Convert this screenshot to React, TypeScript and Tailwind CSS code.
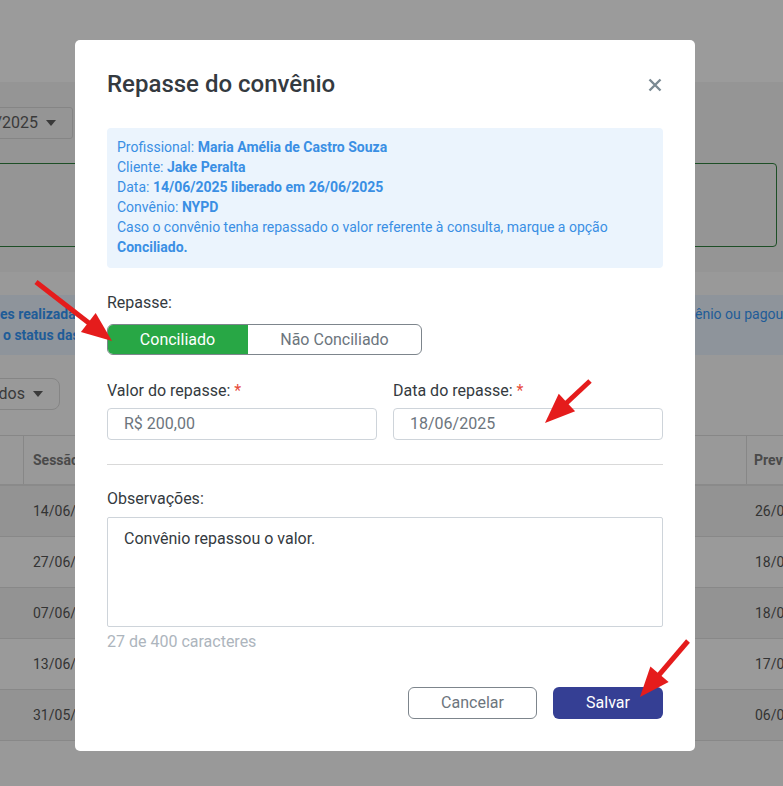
import React from "react";

type Pt = [number, number];

function Arrow({ tail, tip }: { tail: Pt; tip: Pt }) {
  const dx = tip[0] - tail[0];
  const dy = tip[1] - tail[1];
  const len = Math.hypot(dx, dy);
  const ux = dx / len;
  const uy = dy / len;
  const headLen = 30;
  const half = 12;
  const bx = tip[0] - ux * headLen;
  const by = tip[1] - uy * headLen;
  const px = -uy;
  const py = ux;
  const c1: Pt = [bx + px * half, by + py * half];
  const c2: Pt = [bx - px * half, by - py * half];
  const lineEnd: Pt = [bx + ux * 4, by + uy * 4];
  return (
    <g>
      <line
        x1={tail[0]}
        y1={tail[1]}
        x2={lineEnd[0]}
        y2={lineEnd[1]}
        stroke="#e51c1c"
        strokeWidth={5}
      />
      <polygon
        points={`${tip[0]},${tip[1]} ${c1[0]},${c1[1]} ${c2[0]},${c2[1]}`}
        fill="#e51c1c"
      />
    </g>
  );
}

const rows = [
  { d: "14/06/2025", p: "26/07/2025", bg: "bg-[#939393]" },
  { d: "27/06/2025", p: "18/07/2025", bg: "bg-[#9a9a9a]" },
  { d: "07/06/2025", p: "18/07/2025", bg: "bg-[#939393]" },
  { d: "13/06/2025", p: "17/07/2025", bg: "bg-[#9a9a9a]" },
  { d: "31/05/2025", p: "06/07/2025", bg: "bg-[#939393]" },
];

export default function App() {
  return (
    <div
      className="relative w-[783px] h-[786px] overflow-hidden bg-[#999999] text-[#343a40]"
      style={{ fontFamily: "Roboto, 'Noto Sans', Arial, sans-serif" }}
    >
      {/* Background page (dimmed) */}
      <div className="h-[82px] bg-[#9b9b9b]" />
      <div className="h-[190px] bg-[#959595] pt-[25px]">
        <div className="ml-[-60px] w-[133px] h-[32px] border border-[#858585] rounded-[3px] flex items-center justify-end pr-[16px] gap-[8px] text-[16px] text-[#3a3a3a]">
          <span className="whitespace-nowrap">06/2025</span>
          <span className="w-0 h-0 border-l-[5px] border-r-[5px] border-t-[6px] border-l-transparent border-r-transparent border-t-[#3a3a3a]" />
        </div>
        <div className="mt-[24px] ml-[-20px] w-[797px] h-[84px] border border-[#1d4f26] rounded-[4px]" />
      </div>
      <div className="h-[23px] bg-[#999999]" />
      <div className="h-[60px] bg-[#8e949b] flex flex-col justify-center text-[14px] leading-[21px] text-[#1f5c98]">
        <div className="flex whitespace-nowrap">
          <span className="w-[695px] shrink-0 font-bold">es realizadas</span>
          <span className="shrink-0">ênio ou pagou</span>
        </div>
        <div className="ml-[3px] font-bold whitespace-nowrap">o status das</div>
      </div>
      <div className="h-[80px] bg-[#999999] pt-[23px]">
        <div className="ml-[-60px] w-[120px] h-[32px] border border-[#858585] rounded-[8px] flex items-center justify-end pr-[16px] gap-[8px] text-[16px] text-[#3a3a3a]">
          <span className="whitespace-nowrap">Todos</span>
          <span className="w-0 h-0 border-l-[5px] border-r-[5px] border-t-[6px] border-l-transparent border-r-transparent border-t-[#3a3a3a]" />
        </div>
      </div>
      <div className="border-t border-[#878787]">
        <div className="h-[50px] flex bg-[#999999] border-b-2 border-[#8a8a8a] text-[14px] font-bold text-[#4a4a4a] whitespace-nowrap">
          <div className="w-[24px] shrink-0 border-r border-[#878787]" />
          <div className="w-[723px] shrink-0 border-r border-[#878787] flex items-center pl-[9px]">
            Sessão
          </div>
          <div className="shrink-0 flex items-center pl-[7px]">Previsão</div>
        </div>
        {rows.map((r) => (
          <div
            key={r.d}
            className={`h-[51px] flex items-center ${r.bg} border-b border-[#888888] text-[14px] text-[#333333] whitespace-nowrap`}
          >
            <div className="w-[33px] shrink-0" />
            <div className="w-[722px] shrink-0">{r.d}</div>
            <div className="shrink-0">{r.p}</div>
          </div>
        ))}
      </div>

      {/* Modal */}
      <div className="absolute left-[75px] top-[40px] w-[620px] h-[711px] bg-white rounded-[5px] px-[32px]">
        <div className="h-[88px] flex items-center justify-between">
          <h2 className="text-[24px] font-medium text-[#343a40] leading-[28px]">
            Repasse do convênio
          </h2>
          <svg width="14" height="14" viewBox="0 0 14 14" className="mr-[1px] mt-[2px]">
            <path d="M1.5 1.5 L12.5 12.5 M12.5 1.5 L1.5 12.5" stroke="#7b8a93" strokeWidth="2.4" strokeLinecap="butt" />
          </svg>
        </div>
        <div className="bg-[#ebf4fd] rounded-[4px] pt-[9px] pb-[11px] px-[10px] text-[14px] leading-[20px] text-[#3a8fe4]">
          <div>
            Profissional: <b className="font-bold">Maria Amélia de Castro Souza</b>
          </div>
          <div>
            Cliente: <b className="font-bold">Jake Peralta</b>
          </div>
          <div>
            Data: <b className="font-bold">14/06/2025 liberado em 26/06/2025</b>
          </div>
          <div>
            Convênio: <b className="font-bold">NYPD</b>
          </div>
          <div>
            Caso o convênio tenha repassado o valor referente à consulta, marque a opção
          </div>
          <div className="font-bold">Conciliado.</div>
        </div>
        <div className="mt-[23px] text-[16px] leading-[24px]">Repasse:</div>
        <div className="mt-[9px] flex w-[315px] h-[31px] rounded-[6px] border border-[#7d858c] overflow-hidden text-[16px]">
          <div className="w-[141px] -my-px -ml-px bg-[#28a745] text-white flex items-center justify-center">
            Conciliado
          </div>
          <div className="flex-1 flex items-center justify-center text-[#6c757d]">
            Não Conciliado
          </div>
        </div>
        <div className="mt-[24px] flex gap-[16px]">
          <div className="flex-1">
            <div className="text-[16px] leading-[24px]">
              Valor do repasse: <span className="text-[#e74c3c]">*</span>
            </div>
            <div className="mt-[5px] h-[32px] border border-[#ced4da] rounded-[4px] flex items-center pl-[16px] text-[16px] text-[#6c757d]">
              R$ 200,00
            </div>
          </div>
          <div className="flex-1">
            <div className="text-[16px] leading-[24px]">
              Data do repasse: <span className="text-[#e74c3c]">*</span>
            </div>
            <div className="mt-[5px] h-[32px] border border-[#ced4da] rounded-[4px] flex items-center pl-[16px] text-[16px] text-[#6c757d]">
              18/06/2025
            </div>
          </div>
        </div>
        <div className="mt-[24px] h-px bg-[#d9d9d9]" />
        <div className="mt-[22px] text-[16px] leading-[24px]">Observações:</div>
        <div className="mt-[6px] h-[110px] border border-[#ced4da] rounded-[2px] pl-[16px] pt-[9px] text-[16px] leading-[24px] text-[#343a40]">
          Convênio repassou o valor.
        </div>
        <div className="mt-[3px] text-[16px] leading-[24px] text-[#adb5bd]">
          27 de 400 caracteres
        </div>
        <div className="mt-[33px] flex justify-end gap-[16px]">
          <div className="w-[129px] h-[32px] border border-[#7d858c] rounded-[6px] flex items-center justify-center text-[16px] text-[#6c757d]">
            Cancelar
          </div>
          <div className="w-[110px] h-[32px] bg-[#353f94] rounded-[6px] flex items-center justify-center text-[16px] text-white">
            Salvar
          </div>
        </div>
      </div>

      {/* Annotation arrows */}
      <svg className="absolute inset-0 pointer-events-none" width="783" height="786">
        <Arrow tail={[36, 282]} tip={[112, 341]} />
        <Arrow tail={[590, 381]} tip={[545, 423]} />
        <Arrow tail={[688, 641]} tip={[640, 697]} />
      </svg>
    </div>
  );
}
